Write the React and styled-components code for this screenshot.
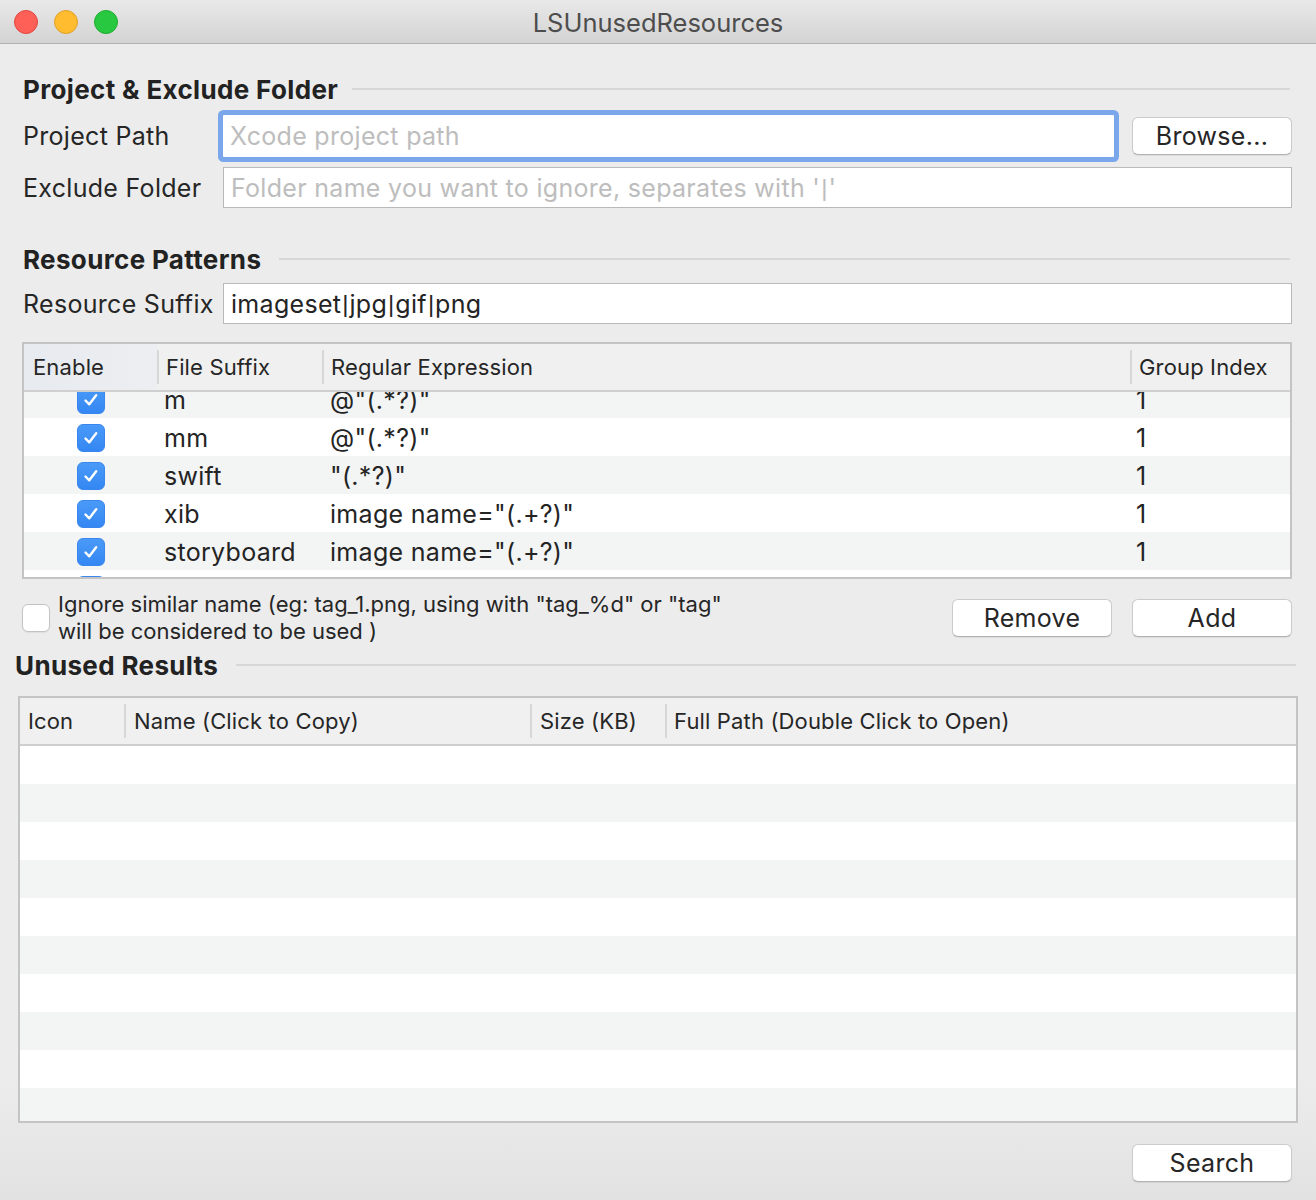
import React from 'react';
import styled, { createGlobalStyle } from 'styled-components';

const FONT = `Inter, "Noto Sans", "Liberation Sans", sans-serif`;
const PIPE_FONT = `"Liberation Sans", "Noto Sans", sans-serif`;

const Global = createGlobalStyle`
  html, body { margin: 0; padding: 0; background: #ececec; }
  body { font-family: ${FONT}; overflow: hidden; }
  * { box-sizing: border-box; }
`;

const Window = styled.div`
  width: 1316px;
  height: 1200px;
  display: flex;
  flex-direction: column;
  background: linear-gradient(to bottom, #ececec 0%, #ececec 90%, #e2e2e2 100%);
  color: #242424;
`;

const TitleBar = styled.div`
  height: 44px;
  flex: none;
  display: grid;
  grid-template-columns: 1fr auto 1fr;
  align-items: center;
  background: linear-gradient(to bottom, #e9e9e9, #d3d3d3);
  border-bottom: 1px solid #b2b2b2;
`;

const Lights = styled.div`
  display: flex;
  gap: 16px;
  padding-left: 14px;
`;

const Light = styled.span`
  width: 24px;
  height: 24px;
  border-radius: 50%;
  background: ${p => p.$c};
  border: 1px solid ${p => p.$b};
`;

const Title = styled.div`
  font-size: 25.5px;
  color: #4d4d4d;
  padding-top: 2px;
`;

const Content = styled.div`
  display: flex;
  flex-direction: column;
`;

const Block = styled.div`
  margin-top: ${p => p.$mt || 0}px;
  padding-left: ${p => p.$pl ?? 22}px;
  padding-right: ${p => p.$pr ?? 24}px;
`;

const SectionHead = styled.div`
  display: flex;
  align-items: center;
  height: 30px;
  gap: ${p => p.$gap || 14}px;
  padding-left: ${p => p.$indent ?? 1}px;
`;

const SectionTitle = styled.div`
  font-size: 26px;
  font-weight: 700;
  letter-spacing: 0.35px;
  color: #222;
  white-space: nowrap;
`;

const Rule = styled.div`
  flex: 1;
  height: 2px;
  background: #d7d7d7;
  margin-right: ${p => p.$mr || 0}px;
`;

const FormRow = styled.div`
  display: grid;
  grid-template-columns: 200px 1fr auto;
  align-items: center;
  height: ${p => p.$h}px;
`;

const Label = styled.div`
  font-size: 25px;
  letter-spacing: 0.3px;
  color: #262626;
  padding-left: 1px;
  white-space: nowrap;
`;

const Field = styled.div`
  height: ${p => p.$h || 41}px;
  display: flex;
  align-items: center;
  margin-left: ${p => (p.$focused ? 0 : 1)}px;
  border: 1px solid ${p => (p.$focused ? '#79a6ea' : '#b9b9b9')};
  border-radius: ${p => (p.$focused ? 2 : 0)}px;
  box-shadow: ${p => (p.$focused ? '0 0 0 4px #7aa7eb' : 'none')};
  background: #fff;
  font-size: 25px;
  letter-spacing: 0.3px;
  color: ${p => (p.$placeholder ? '#bdbdbd' : '#242424')};
  padding: 0 7px;
  white-space: nowrap;
  overflow: hidden;
`;

const Pipe = styled.span`
  font-family: ${PIPE_FONT};
  font-size: 24px;
  letter-spacing: 0;
  margin: 0 1px;
`;

const Button = styled.button`
  width: 160px;
  height: 38px;
  margin-left: ${p => p.$ml || 0}px;
  border-radius: 6px;
  background: #fff;
  border: 1px solid #cbcbcb;
  border-bottom-color: #b2b2b2;
  box-shadow: 0 1px 1px rgba(0, 0, 0, 0.07);
  font-family: ${FONT};
  font-size: 25px;
  letter-spacing: 0.3px;
  color: #262626;
  padding: 0;
`;

const Table = styled.div`
  height: ${p => p.$h}px;
  border: 2px solid #c4c4c4;
  background: #fff;
  display: flex;
  flex-direction: column;
  overflow: hidden;
`;

const HeaderRow = styled.div`
  display: grid;
  grid-template-columns: ${p => p.$cols};
  height: 48px;
  flex: none;
  background: #f0f0f0;
  border-bottom: 2px solid #cfcfcf;
`;

const HeaderCell = styled.div`
  display: flex;
  align-items: center;
  padding-left: ${p => p.$pl || 9}px;
  font-size: 22px;
  letter-spacing: 0.15px;
  color: #262626;
  white-space: nowrap;
  background: ${p =>
    p.$first
      ? p.$tint
        ? 'linear-gradient(to right, #e7eaef, #eceef1)'
        : 'none'
      : 'linear-gradient(#d7d7d7, #d7d7d7) left center / 2px 34px no-repeat'};
`;

const Body = styled.div`
  flex: 1;
  overflow: hidden;
`;

const Rows = styled.div`
  margin-top: ${p => p.$offset || 0}px;
`;

const Row = styled.div`
  display: grid;
  grid-template-columns: ${p => p.$cols};
  height: 38px;
  background: ${p => (p.$alt ? '#f3f4f4' : '#fff')};
`;

const Cell = styled.div`
  display: flex;
  align-items: center;
  justify-content: ${p => (p.$center ? 'center' : 'flex-start')};
  padding-left: ${p => (p.$center ? 0 : p.$pl || 7)}px;
  padding-top: 2px;
  font-size: 25px;
  letter-spacing: 0.3px;
  color: #242424;
  white-space: nowrap;
`;

const Check = styled.span`
  width: 28px;
  height: 28px;
  flex: none;
  border-radius: 6px;
  display: flex;
  align-items: center;
  justify-content: center;
  background: ${p => (p.$on ? 'linear-gradient(to bottom, #4a9af8, #3487f3)' : '#fff')};
  border: 1px solid ${p => (p.$on ? '#3a86ee' : '#c3c3c3')};
  box-shadow: ${p => (p.$on ? 'none' : '0 1px 1px rgba(0,0,0,0.06)')};
`;

const OptionsRow = styled.div`
  display: flex;
  align-items: center;
  height: 54px;
  gap: 20px;
`;

const OptionLeft = styled.div`
  flex: 1;
  display: flex;
  align-items: center;
  gap: 8px;
`;

const OptionText = styled.div`
  font-size: 22px;
  line-height: 27px;
  color: #262626;
`;

const Footer = styled.div`
  display: flex;
  justify-content: flex-end;
`;

const CheckMark = () => (
  <svg width="20" height="20" viewBox="0 0 20 20">
    <path d="M4.5 10.5 L8.3 14.3 L15.2 5.2" fill="none" stroke="#fff" strokeWidth="2.4" strokeLinecap="round" strokeLinejoin="round" />
  </svg>
);

const withPipes = text =>
  text.split('|').flatMap((part, i) => (i === 0 ? [part] : [<Pipe key={i}>|</Pipe>, part]));

const PATTERN_COLS = '133px 165px 808px 1fr';
const RESULT_COLS = '104px 406px 135px 1fr';

const patterns = [
  ['m', '@"(.*?)"', '1'],
  ['mm', '@"(.*?)"', '1'],
  ['swift', '"(.*?)"', '1'],
  ['xib', 'image name="(.+?)"', '1'],
  ['storyboard', 'image name="(.+?)"', '1'],
  ['strings', '=\\s*"(.*)"\\s*;', '1'],
];

export default function App() {
  return (
    <>
      <Global />
      <Window>
        <TitleBar>
          <Lights>
            <Light $c="#fe5f57" $b="#e2463f" />
            <Light $c="#febc2e" $b="#e0a028" />
            <Light $c="#28c840" $b="#1eac2f" />
          </Lights>
          <Title>LSUnusedResources</Title>
          <div />
        </TitleBar>

        <Content>
          <Block $mt={30}>
            <SectionHead>
              <SectionTitle>Project &amp; Exclude Folder</SectionTitle>
              <Rule $mr={2} />
            </SectionHead>
          </Block>

          <Block $mt={10}>
            <FormRow $h={44}>
              <Label>Project Path</Label>
              <Field $focused $placeholder $h={44}>Xcode project path</Field>
              <Button $ml={17}>Browse...</Button>
            </FormRow>
          </Block>

          <Block $mt={9}>
            <FormRow $h={41}>
              <Label>Exclude Folder</Label>
              <Field $placeholder>
                {withPipes("Folder name you want to ignore, separates with '|'")}
              </Field>
            </FormRow>
          </Block>

          <Block $mt={36}>
            <SectionHead $gap={18}>
              <SectionTitle>Resource Patterns</SectionTitle>
              <Rule $mr={2} />
            </SectionHead>
          </Block>

          <Block $mt={9}>
            <FormRow $h={41}>
              <Label>Resource Suffix</Label>
              <Field>{withPipes('imageset|jpg|gif|png')}</Field>
            </FormRow>
          </Block>

          <Block $mt={18}>
            <Table $h={237}>
              <HeaderRow $cols={PATTERN_COLS}>
                <HeaderCell $first $tint>Enable</HeaderCell>
                <HeaderCell>File Suffix</HeaderCell>
                <HeaderCell>Regular Expression</HeaderCell>
                <HeaderCell>Group Index</HeaderCell>
              </HeaderRow>
              <Body>
                <Rows $offset={-12}>
                  {patterns.map(([suffix, re, idx], i) => (
                    <Row key={suffix} $cols={PATTERN_COLS} $alt={i % 2 === 0}>
                      <Cell $center>
                        <Check $on>
                          <CheckMark />
                        </Check>
                      </Cell>
                      <Cell>{suffix}</Cell>
                      <Cell $pl={8}>{re}</Cell>
                      <Cell $pl={6}>{idx}</Cell>
                    </Row>
                  ))}
                </Rows>
              </Body>
            </Table>
          </Block>

          <Block $mt={12}>
            <OptionsRow>
              <OptionLeft>
                <Check />
                <OptionText>
                  Ignore similar name (eg: tag_1.png, using with "tag_%d" or "tag"
                  <br />
                  will be considered to be used )
                </OptionText>
              </OptionLeft>
              <Button>Remove</Button>
              <Button>Add</Button>
            </OptionsRow>
          </Block>

          <Block $mt={5} $pl={15} $pr={20}>
            <SectionHead $gap={18} $indent={0}>
              <SectionTitle>Unused Results</SectionTitle>
              <Rule />
            </SectionHead>
          </Block>

          <Block $mt={16} $pl={18} $pr={18}>
            <Table $h={427}>
              <HeaderRow $cols={RESULT_COLS}>
                <HeaderCell $first $pl={8}>Icon</HeaderCell>
                <HeaderCell $pl={10}>Name (Click to Copy)</HeaderCell>
                <HeaderCell $pl={10}>Size (KB)</HeaderCell>
                <HeaderCell>Full Path (Double Click to Open)</HeaderCell>
              </HeaderRow>
              <Body>
                <Rows>
                  {Array.from({ length: 10 }).map((_, i) => (
                    <Row key={i} $cols={RESULT_COLS} $alt={i % 2 === 1}>
                      <Cell />
                      <Cell />
                      <Cell />
                      <Cell />
                    </Row>
                  ))}
                </Rows>
              </Body>
            </Table>
          </Block>

          <Block $mt={21}>
            <Footer>
              <Button>Search</Button>
            </Footer>
          </Block>
        </Content>
      </Window>
    </>
  );
}
